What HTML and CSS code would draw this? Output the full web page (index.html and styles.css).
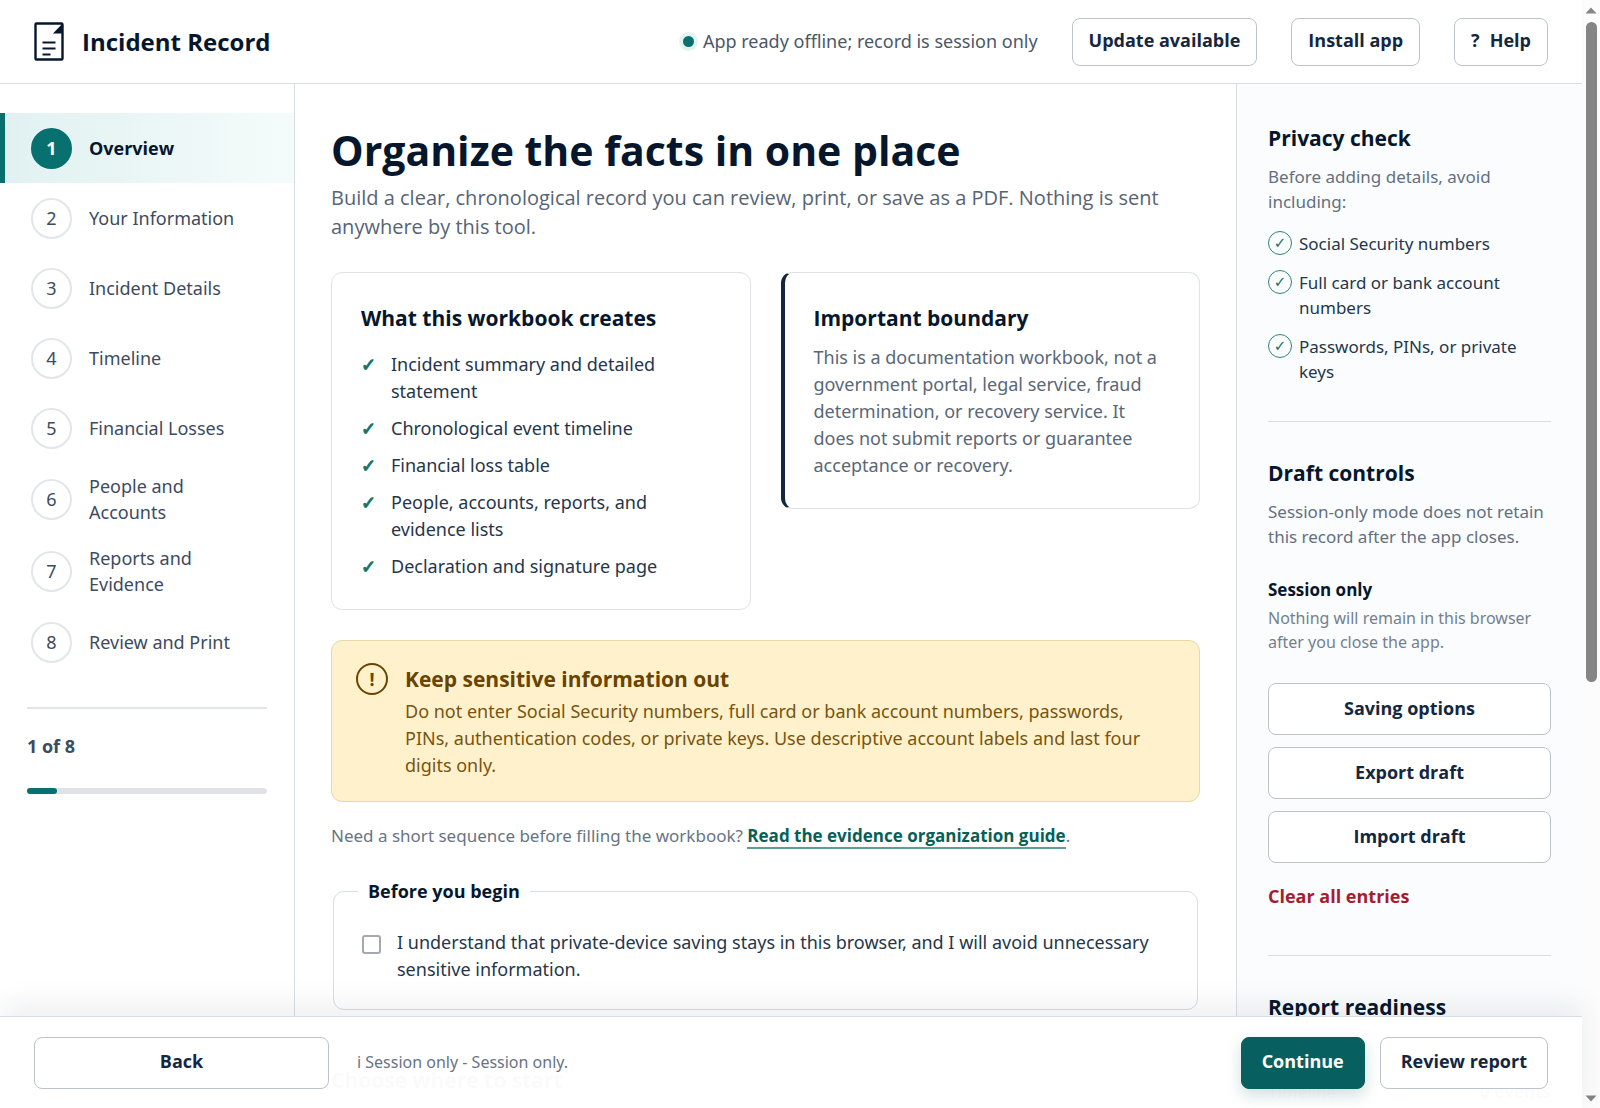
FILE: index.html
```html
<!DOCTYPE html>
<html lang="en">
<head>
    <meta charset="UTF-8">
    <meta name="viewport" content="width=device-width, initial-scale=1.0">
    <title>Incident Record</title>
    <link rel="stylesheet" href="styles.css">
</head>
<body>
    <div class="window">
        <div class="app">
            <header class="topbar">
                <div class="brand">
                    <svg class="brand-icon" width="30" height="39" viewBox="0 0 30 39" aria-hidden="true">
                        <rect x="1.5" y="1.5" width="27" height="36" rx="1" fill="#fff" stroke="#06172d" stroke-width="2.4"/>
                        <path d="M28.5 1.5V11.5H19Z" fill="#06172d"/>
                        <path d="M8.500 20.500H21.500M8.500 26.500H21.500M8.500 32.500H16.500" stroke="#06172d" stroke-width="2"/>
                    </svg>
                    <span>Incident Record</span>
                </div>
                <div class="top-actions">
                    <span class="status"><span class="status-dot"></span>App ready offline; record is session only</span>
                    <button type="button" class="btn btn-top">Update available</button>
                    <button type="button" class="btn btn-top">Install app</button>
                    <button type="button" class="btn btn-top btn-help"><span>?</span><span>Help</span></button>
                </div>
            </header>

            <div class="layout">
                <nav class="sidebar" aria-label="Workbook steps">
                    <ol class="steps">
                        <li><a href="#overview" class="step active"><span class="step-number">1</span>Overview</a></li>
                        <li><a href="#information" class="step"><span class="step-number">2</span>Your Information</a></li>
                        <li><a href="#incident" class="step"><span class="step-number">3</span>Incident Details</a></li>
                        <li><a href="#timeline" class="step"><span class="step-number">4</span>Timeline</a></li>
                        <li><a href="#losses" class="step"><span class="step-number">5</span>Financial Losses</a></li>
                        <li><a href="#people" class="step"><span class="step-number">6</span>People and Accounts</a></li>
                        <li><a href="#reports" class="step"><span class="step-number">7</span>Reports and Evidence</a></li>
                        <li><a href="#review" class="step"><span class="step-number">8</span>Review and Print</a></li>
                    </ol>
                    <div class="progress">
                        <strong>1 of 8</strong>
                        <div class="progress-track"><div class="progress-fill" style="width: 12.5%"></div></div>
                    </div>
                </nav>

                <main class="content" id="overview">
                    <h1>Organize the facts in one place</h1>
                    <p class="lead">Build a clear, chronological record you can review, print, or save as a PDF. Nothing is sent anywhere by this tool.</p>

                    <div class="cards">
                        <section class="card">
                            <h2>What this workbook creates</h2>
                            <ul class="check-list">
                                <li>Incident summary and detailed statement</li>
                                <li>Chronological event timeline</li>
                                <li>Financial loss table</li>
                                <li>People, accounts, reports, and evidence lists</li>
                                <li>Declaration and signature page</li>
                            </ul>
                        </section>
                        <section class="card card-boundary">
                            <h2>Important boundary</h2>
                            <p>This is a documentation workbook, not a government portal, legal service, fraud determination, or recovery service. It does not submit reports or guarantee acceptance or recovery.</p>
                        </section>
                    </div>

                    <section class="warning">
                        <span class="warning-icon">!</span>
                        <div>
                            <h2>Keep sensitive information out</h2>
                            <p>Do not enter Social Security numbers, full card or bank account numbers, passwords, PINs, authentication codes, or private keys. Use descriptive account labels and last four digits only.</p>
                        </div>
                    </section>

                    <p class="guide">Need a short sequence before filling the workbook? <a href="#guide">Read the evidence organization guide</a>.</p>

                    <fieldset class="begin">
                        <legend>Before you begin</legend>
                        <input type="checkbox" id="understand">
                        <label for="understand">I understand that private-device saving stays in this browser, and I will avoid unnecessary sensitive information.</label>
                    </fieldset>

                    <h2 class="start-title">Choose where to start</h2>
                </main>

                <aside class="panel">
                    <section>
                        <h2>Privacy check</h2>
                        <p>Before adding details, avoid including:</p>
                        <ul class="avoid-list">
                            <li>Social Security numbers</li>
                            <li>Full card or bank account numbers</li>
                            <li>Passwords, PINs, or private keys</li>
                        </ul>
                    </section>
                    <section>
                        <h2>Draft controls</h2>
                        <p>Session-only mode does not retain this record after the app closes.</p>
                        <div class="save-mode">
                            <strong>Session only</strong>
                            <small>Nothing will remain in this browser after you close the app.</small>
                        </div>
                        <div class="draft-buttons">
                            <button type="button" class="btn">Saving options</button>
                            <button type="button" class="btn">Export draft</button>
                            <button type="button" class="btn">Import draft</button>
                        </div>
                        <button type="button" class="btn-clear">Clear all entries</button>
                    </section>
                    <section>
                        <h2>Report readiness</h2>
                        <div class="readiness-row"><span>Timeline</span><strong>0 events</strong></div>
                    </section>
                </aside>
            </div>

            <footer class="bottombar">
                <button type="button" class="btn btn-back">Back</button>
                <span class="save-note">i Session only - Session only.</span>
                <button type="button" class="btn btn-primary">Continue</button>
                <button type="button" class="btn btn-review">Review report</button>
            </footer>
        </div>

        <div class="scrollbar" aria-hidden="true">
            <svg width="12" height="7" viewBox="0 0 12 7"><path d="M6 0.500L11.500 6.500H0.500Z" fill="#858585"/></svg>
            <div class="scroll-track"><div class="scroll-thumb"></div></div>
            <svg width="12" height="7" viewBox="0 0 12 7"><path d="M6 6.500L11.500 0.500H0.500Z" fill="#858585"/></svg>
        </div>
    </div>
</body>
</html>
```

FILE: styles.css
```css
* {
    box-sizing: border-box;
}
body {
    margin: 0;
    font-family: "Noto Sans", "Open Sans", sans-serif;
    font-size: 18px;
    line-height: 27px;
    color: #25364b;
    background-color: #fff;
}
h1, h2, p, ul, ol {
    margin: 0;
    padding: 0;
}
ul, ol {
    list-style: none;
}
button, input {
    font: inherit;
}
h1, h2, strong, legend, .brand, .btn, .btn-clear, .step.active, .guide a {
    font-family: "Open Sans", "Noto Sans", sans-serif;
    font-weight: 700;
}
h1, h2 {
    color: #06172d;
}
h2 {
    font-size: 21px;
    line-height: 32px;
}
.window {
    display: flex;
    height: 100vh;
    overflow: hidden;
}
.app {
    flex: 1;
    min-width: 0;
    display: flex;
    flex-direction: column;
    position: relative;
}

/* Buttons */
.btn {
    min-height: 52px;
    padding: 0 16px 2px;
    border: 1px solid #bcc3cb;
    border-radius: 8px;
    background-color: #fff;
    color: #14273f;
    font-size: 18px;
    cursor: pointer;
}
.btn-top {
    min-height: 48px;
}
.btn-help {
    display: flex;
    align-items: center;
    gap: 10px;
}

/* Header */
.topbar {
    display: flex;
    align-items: center;
    justify-content: space-between;
    height: 84px;
    flex: none;
    padding: 0 34px;
    border-bottom: 1px solid #d8dde1;
}
.brand {
    display: flex;
    align-items: center;
    gap: 18px;
    color: #06172d;
    font-size: 24px;
}
.top-actions {
    display: flex;
    align-items: center;
    gap: 34px;
}
.status {
    display: flex;
    align-items: center;
    gap: 9px;
    color: #4a5868;
}
.status-dot {
    width: 11px;
    height: 11px;
    border-radius: 50%;
    background-color: #08716f;
    box-shadow: 0 0 0 4px #e2f3f2;
}

/* Columns */
.layout {
    flex: 1;
    min-height: 0;
    display: grid;
    grid-template-columns: 295px minmax(0, 1fr) 346px;
    overflow: hidden;
}
.sidebar {
    padding-top: 29px;
    border-right: 1px solid #d8dde1;
}
.step {
    display: flex;
    align-items: center;
    gap: 17px;
    min-height: 70px;
    padding: 10px 48px 10px 26px;
    border-left: 5px solid transparent;
    color: #3c4b5f;
    line-height: 26px;
    text-decoration: none;
}
.step.active {
    border-left-color: #08716f;
    background: linear-gradient(90deg, #e1f1f1, #f5fbfb);
    color: #06172d;
}
.step-number {
    display: flex;
    align-items: center;
    justify-content: center;
    flex: none;
    width: 41px;
    height: 41px;
    border: 2px solid #e3e6e9;
    border-radius: 50%;
}
.active .step-number {
    border-color: #08716f;
    background-color: #08716f;
    color: #fff;
}
.progress {
    margin: 30px 27px 0;
    padding-top: 24px;
    border-top: 2px solid #e3e6e9;
    color: #3c4b5f;
}
.progress-track {
    height: 6px;
    margin-top: 28px;
    border-radius: 3px;
    background-color: #e0e2e5;
}
.progress-fill {
    height: 100%;
    border-radius: 3px;
    background-color: #08716f;
}

/* Main content */
.content {
    padding: 36px 36px 0;
}
h1 {
    font-size: 41px;
    line-height: 60px;
}
.lead {
    margin-top: 3px;
    font-family: "Open Sans", "Noto Sans", sans-serif;
    font-size: 20px;
    line-height: 29px;
    color: #566475;
}
.cards {
    display: grid;
    grid-template-columns: 1fr 1fr;
    align-items: start;
    gap: 30px;
    margin: 31px 0 30px;
}
.card {
    padding: 29px;
    border: 1px solid #dfe3e6;
    border-radius: 11px;
}
.card-boundary {
    border-left: 4px solid #14273f;
}
.card p {
    margin-top: 10px;
    color: #596778;
}
.check-list {
    display: grid;
    gap: 10px;
    margin-top: 17px;
}
.check-list li {
    display: flex;
    gap: 16px;
}
.check-list li::before {
    content: "✓";
    width: 14px;
    flex: none;
    color: #12756b;
    font-family: "DejaVu Sans", sans-serif;
    -webkit-text-stroke: 1px #12756b;
}
.warning {
    display: flex;
    gap: 17px;
    padding: 22px 36px 22px 24px;
    border: 1px solid #e6d9a8;
    border-radius: 11px;
    background-color: #fff1cc;
    color: #78550f;
}
.warning h2 {
    color: #684400;
}
.warning p {
    margin-top: 3px;
}
.warning-icon {
    display: flex;
    align-items: center;
    justify-content: center;
    flex: none;
    width: 32px;
    height: 32px;
    border: 2px solid #684400;
    border-radius: 50%;
    color: #684400;
    font-weight: 700;
}
.guide {
    margin-top: 20px;
    font-size: 17px;
    color: #697483;
}
.guide a {
    border-bottom: 2px solid #5f9d93;
    color: #075f57;
    text-decoration: none;
}
.begin {
    display: flex;
    align-items: flex-start;
    gap: 16px;
    margin: 29px 2px 0;
    padding: 24px 28px 26px;
    border: 1px solid #d8dde1;
    border-radius: 11px;
}
.begin legend {
    margin-left: -4px;
    padding: 0 10px;
    color: #06172d;
}
.begin input {
    appearance: none;
    flex: none;
    width: 19px;
    height: 19px;
    margin: 6px 0 0;
    border: 2px solid #a4a9af;
    border-radius: 3px;
    background-color: #fff;
}
.start-title {
    margin-top: 54px;
}

/* Right panel */
.panel {
    padding: 2px 31px 0;
    border-left: 1px solid #d8dde1;
    background-color: #fafcfd;
    font-size: 17px;
    line-height: 25px;
}
.panel section {
    padding: 36px 0 37px;
}
.panel section + section {
    padding-top: 35px;
    border-top: 1px solid #d8dde1;
}
.panel p {
    margin-top: 10px;
    color: #637080;
}
.avoid-list {
    display: grid;
    gap: 14px;
    margin-top: 17px;
}
.avoid-list li {
    display: flex;
    gap: 7px;
}
.avoid-list li::before {
    content: "✓";
    box-sizing: border-box;
    flex: none;
    width: 24px;
    height: 24px;
    border: 1px solid #2f8379;
    border-radius: 50%;
    color: #12756b;
    font-family: "DejaVu Sans", sans-serif;
    font-size: 15px;
    line-height: 22px;
    text-align: center;
}
.save-mode {
    display: grid;
    gap: 4px;
    margin-top: 28px;
}
.save-mode strong {
    color: #06172d;
}
.save-mode small {
    color: #74808e;
    font-size: 16px;
    line-height: 24px;
}
.draft-buttons {
    display: grid;
    gap: 12px;
    margin-top: 29px;
}
.btn-clear {
    display: block;
    margin: 21px 0 9px;
    padding: 0;
    border: none;
    background: none;
    color: #a51d2d;
    font-size: 18px;
    cursor: pointer;
}
.readiness-row {
    display: flex;
    justify-content: space-between;
    margin-top: 56px;
}

/* Footer lies over the scrolled columns */
.bottombar {
    position: absolute;
    left: 0;
    right: 0;
    bottom: 0;
    display: flex;
    align-items: center;
    gap: 15px;
    height: 92px;
    padding: 0 34px;
    border-top: 1px solid #d8dde1;
    background-color: rgba(255, 255, 255, 0.98);
    box-shadow: 0 -10px 30px rgba(20, 39, 63, 0.08);
}
.btn-back {
    width: 295px;
}
.save-note {
    flex: 1;
    padding-left: 13px;
    color: #697483;
    font-size: 16px;
}
.btn-primary {
    padding: 0 20px 2px;
    border-color: #075f5f;
    background-color: #075f5f;
    color: #fff;
    box-shadow: 0 6px 16px rgba(7, 95, 95, 0.2);
}
.btn-review {
    padding: 0 20px 2px;
}

/* Scrollbar */
.scrollbar {
    display: flex;
    flex-direction: column;
    align-items: center;
    width: 18px;
    flex: none;
    padding: 7px 0 6px;
    background-color: #fcfcfc;
}
.scroll-track {
    flex: 1;
    width: 11px;
    margin: 8px 0;
}
.scroll-thumb {
    height: 62%;
    border-radius: 6px;
    background-color: #858585;
}
```
